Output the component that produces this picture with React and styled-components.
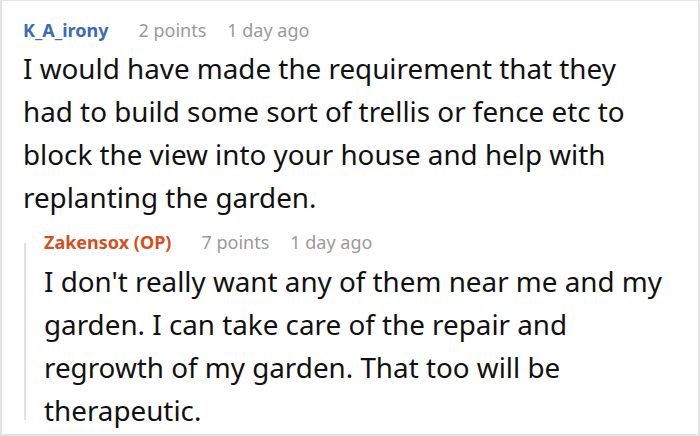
import React from 'react'
import styled, { createGlobalStyle } from 'styled-components'

const GlobalStyle = createGlobalStyle`
  body {
    margin: 0;
    background: #ffffff;
    font-family: "Noto Sans", "Open Sans", sans-serif;
  }
`

export default function App() {
  return (
    <>
      <GlobalStyle />
      <Frame>
        <Comment>
          <Meta>
            <Author>K_A_irony</Author>
            <Points>2 points</Points>
            <Time>1 day ago</Time>
          </Meta>
          <Body>
            I would have made the requirement that they had to build some sort of trellis or fence etc to
            block the view into your house and help with replanting the garden.
          </Body>
        </Comment>

        <Reply>
          <Meta>
            <Author op>Zakensox (OP)</Author>
            <Points>7 points</Points>
            <Time>1 day ago</Time>
          </Meta>
          <Body>
            I don't really want any of them near me and my garden. I can take care of the repair and
            regrowth of my garden. That too will be therapeutic.
          </Body>
        </Reply>
      </Frame>
    </>
  )
}

const Frame = styled.div`
  width: 700px;
  height: 436px;
  box-sizing: border-box;
  border: 2px solid #e4e4e4;
  border-top-width: 1px;
  padding: 17px 30px 0 21px;
  overflow: hidden;
  color: #111;
`

const Comment = styled.div`
  display: flex;
  flex-direction: column;
  gap: 5px;
`

const Reply = styled(Comment)`
  position: relative;
  margin-top: 11px;
  padding-left: 21px;
  gap: 6px;

  &::before {
    content: '';
    position: absolute;
    left: 1px;
    top: 13px;
    bottom: 12px;
    width: 2px;
    background: #e2e2e2;
  }
`

const Meta = styled.div`
  display: flex;
  align-items: baseline;
  font-size: 18px;
  line-height: 24px;
  white-space: nowrap;
`

const Author = styled.span`
  font-weight: 700;
  color: ${(p) => (p.op ? '#d4501e' : '#3c6cb6')};
  margin-right: 30px;
`

const Points = styled.span`
  color: #9a9a9a;
  margin-right: 21px;
`

const Time = styled.span`
  color: #9a9a9a;
`

const Body = styled.div`
  font-size: 27.8px;
  line-height: 43px;
  color: #111;
`
